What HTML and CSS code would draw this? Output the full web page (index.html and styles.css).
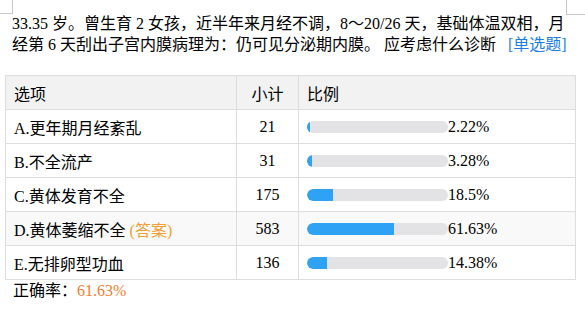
FILE: index.html
```html
<!DOCTYPE html>
<html lang="zh-CN">
<head>
<meta charset="utf-8">
<title>单选题统计</title>
<link rel="stylesheet" href="styles.css">
</head>
<body>
<div class="page">
  <span class="mark mark-left"></span>
  <span class="mark mark-right"></span>
  <p class="question">33.35 岁。曾生育 2 女孩，近半年来月经不调，8～20/26 天，基础体温双相，月经第 6 天刮出子宫内膜病理为：仍可见分泌期内膜。 应考虑什么诊断 <span class="qtype">[单选题]</span></p>
  <table class="stats">
    <colgroup>
      <col class="c-opt">
      <col class="c-cnt">
      <col class="c-pct">
    </colgroup>
    <thead>
      <tr><th>选项</th><th class="center">小计</th><th>比例</th></tr>
    </thead>
    <tbody>
      <tr><td>A.更年期月经紊乱</td><td class="center">21</td><td><div class="pct"><span class="bar"><span class="fill" style="width:2.22%"></span></span><span>2.22%</span></div></td></tr>
      <tr><td>B.不全流产</td><td class="center">31</td><td><div class="pct"><span class="bar"><span class="fill" style="width:3.28%"></span></span><span>3.28%</span></div></td></tr>
      <tr><td>C.黄体发育不全</td><td class="center">175</td><td><div class="pct"><span class="bar"><span class="fill" style="width:18.5%"></span></span><span>18.5%</span></div></td></tr>
      <tr class="alt"><td>D.黄体萎缩不全 <span class="answer">(答案)</span></td><td class="center">583</td><td><div class="pct"><span class="bar"><span class="fill" style="width:61.63%"></span></span><span>61.63%</span></div></td></tr>
      <tr><td>E.无排卵型功血</td><td class="center">136</td><td><div class="pct"><span class="bar"><span class="fill" style="width:14.38%"></span></span><span>14.38%</span></div></td></tr>
    </tbody>
  </table>
  <p class="rate">正确率：<span class="rate-val">61.63%</span></p>
</div>
</body>
</html>
```

FILE: styles.css
```css
html, body {
  margin: 0;
  padding: 0;
  background: #ffffff;
}
body {
  font-family: "Liberation Serif", "Noto Sans CJK SC", serif;
  color: #000;
  font-size: 16px;
}
.page {
  position: relative;
  width: 585px;
  height: 312px;
  overflow: hidden;
}
.mark {
  position: absolute;
  top: 0;
  width: 12px;
  height: 13px;
  border-color: #c8c8c8;
  border-style: solid;
}
.mark-left {
  left: 0;
  border-width: 0 1px 1px 0;
}
.mark-right {
  left: 566px;
  width: 19px;
  height: 14px;
  border-width: 0 0 1px 1px;
}
.question {
  margin: 0;
  padding: 13px 14px 0 12px;
  line-height: 21px;
  font-size: 16px;
}
.qtype {
  color: #1a7ee6;
  margin-left: 8px;
}
.stats {
  margin: 20px 0 0 5px;
  border-collapse: collapse;
  width: 570px;
  table-layout: fixed;
  font-size: 16px;
}
.c-opt { width: 231px; }
.c-cnt { width: 62px; }
.c-pct { width: 277px; }
.stats th, .stats td {
  border: 1px solid #dddddd;
  height: 33px;
  padding: 0 8px;
  text-align: left;
  font-weight: normal;
  white-space: nowrap;
}
.stats thead th {
  background: #f2f2f2;
}
.stats .center {
  text-align: center;
}
.stats tr.alt td {
  background: #f9f9f9;
}
.answer {
  color: #f0a032;
}
.pct {
  display: flex;
  align-items: center;
}
.bar {
  display: block;
  width: 141px;
  height: 12px;
  border-radius: 6px;
  background: #e3e3e5;
  overflow: hidden;
}
.fill {
  display: block;
  height: 100%;
  background: #2ea3f5;
  border-radius: 6px 0 0 6px;
}
.rate {
  margin: 1px 0 0 13px;
  line-height: 20px;
}
.rate-val {
  color: #f57c2e;
}
```
